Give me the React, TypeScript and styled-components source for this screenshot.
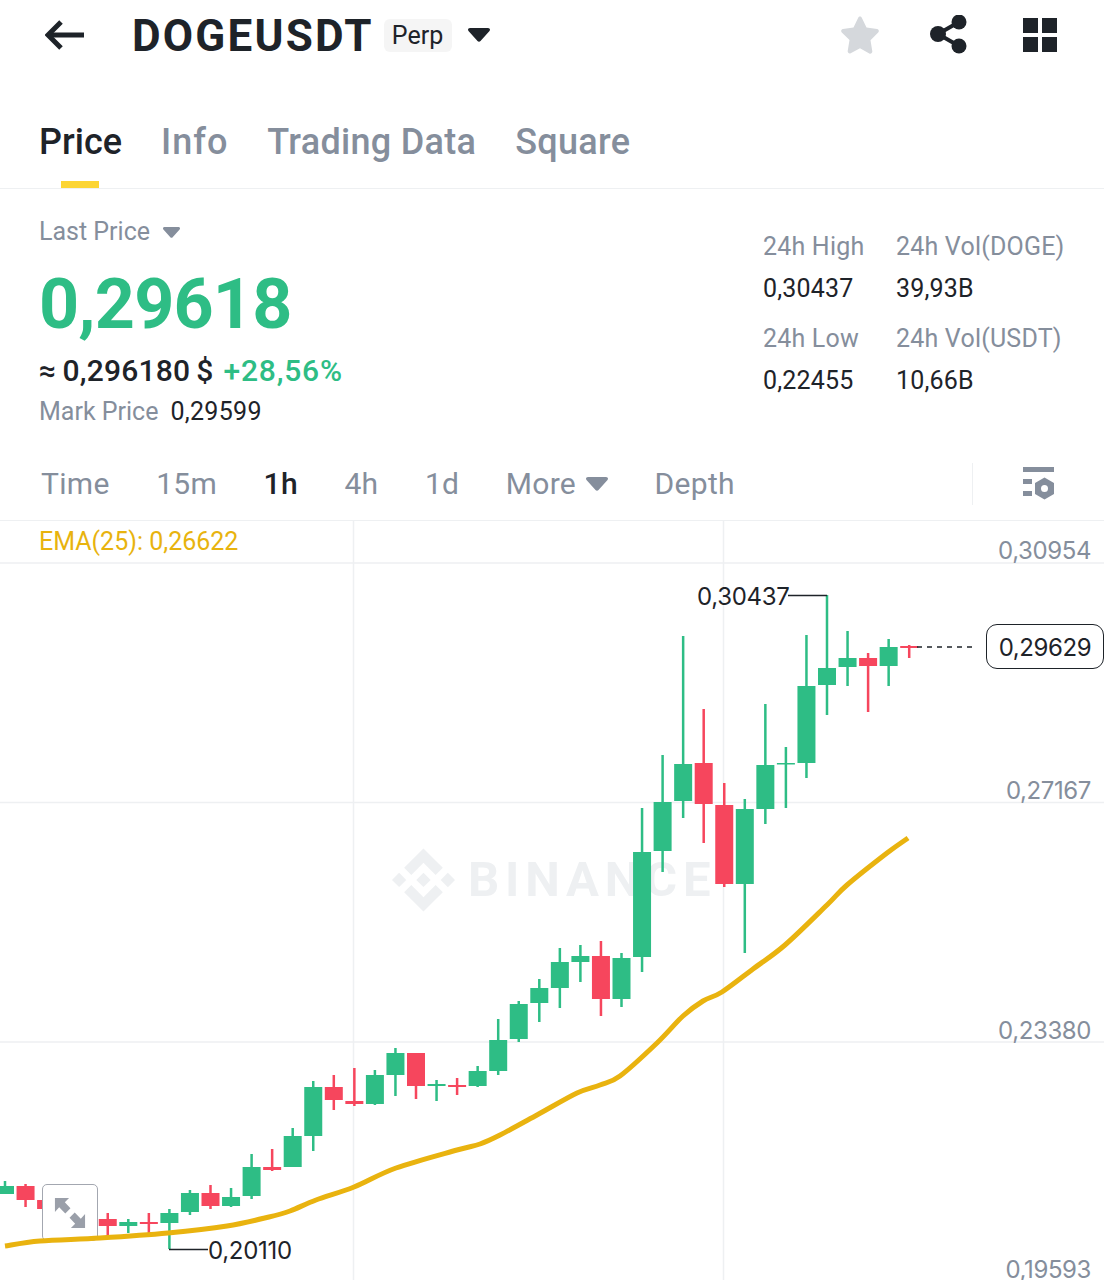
import React from 'react';
import styled, { createGlobalStyle } from 'styled-components';

const DARK = '#1e2329';
const GRAY = '#858e9c';
const GREEN = '#2ebd85';
const RED = '#f6465d';
const LINE = '#eef0f2';
const CHART_TOP = 521;

const GlobalStyle = createGlobalStyle`
  html, body {
    margin: 0;
    background: #fff;
  }
  body {
    font-family: Roboto, "Noto Sans", sans-serif;
    color: ${DARK};
  }
`;

const Page = styled.div`
  width: 1104px;
  height: 1280px;
  overflow: hidden;
  display: flex;
  flex-direction: column;
`;

const Header = styled.header`
  height: 70px;
  flex: none;
  display: flex;
  align-items: center;
  padding: 0 47px 0 45px;
  box-sizing: border-box;
`;

const Title = styled.h1`
  margin: 2px 0 0 47px;
  font-size: 44px;
  line-height: 50px;
  font-weight: 700;
  letter-spacing: 2.2px;
`;

const Badge = styled.span`
  margin-left: 10px;
  height: 33px;
  padding: 0 9px 0 8px;
  display: flex;
  align-items: center;
  font-size: 25px;
  background: #f5f5f5;
  border-radius: 6px;
`;

const HeaderCaret = styled.span`
  margin-left: 16px;
  display: flex;
  margin-top: -1px;
`;

const HeaderIcon = styled.svg<{ $gap?: number }>`
  margin-left: ${(p) => p.$gap ?? 0}px;
  flex: none;
`;

const HeaderActions = styled.div`
  margin-left: auto;
  display: flex;
  align-items: center;
`;

const TabBar = styled.nav`
  height: 119px;
  flex: none;
  box-sizing: border-box;
  padding: 50px 0 0 39px;
  display: flex;
  gap: 39px;
  border-bottom: 1px solid ${LINE};
`;

const Tab = styled.div`
  display: flex;
  flex-direction: column;
  align-items: center;
`;

const TabLabel = styled.span<{ $active?: boolean; $tracking: number }>`
  font-size: 36px;
  line-height: 44px;
  font-weight: 500;
  letter-spacing: ${(p) => p.$tracking}px;
  color: ${(p) => (p.$active ? DARK : GRAY)};
`;

const TabIndicator = styled.span<{ $active?: boolean }>`
  margin-top: 17px;
  width: 38px;
  height: 7px;
  background: ${(p) => (p.$active ? '#fcd535' : 'transparent')};
`;

const Stats = styled.section`
  height: 262px;
  flex: none;
  box-sizing: border-box;
  display: flex;
  justify-content: space-between;
  padding: 27px 40px 0 39px;
`;

const StatsMain = styled.div`
  display: flex;
  flex-direction: column;
`;

const LastPriceRow = styled.div`
  display: flex;
  align-items: center;
  gap: 13px;
  font-size: 25px;
  line-height: 32px;
  color: ${GRAY};
`;

const BigPrice = styled.div`
  margin-top: 20px;
  font-size: 70px;
  line-height: 72px;
  font-weight: 700;
  letter-spacing: -0.8px;
  color: ${GREEN};
`;

const ConvertRow = styled.div`
  margin-top: 13px;
  display: flex;
  gap: 10px;
  font-size: 30px;
  line-height: 36px;
  font-weight: 500;
  letter-spacing: 0.2px;
  word-spacing: -1.5px;
`;

const Change = styled.span`
  letter-spacing: 0.8px;
  color: ${GREEN};
`;

const MarkRow = styled.div`
  margin-top: 8px;
  display: flex;
  gap: 12px;
  font-size: 25px;
  line-height: 30px;
  color: ${GRAY};
`;

const MarkValue = styled.span`
  color: ${DARK};
  letter-spacing: 0.3px;
`;

const StatsGrid = styled.div`
  margin-top: 15px;
  display: grid;
  grid-template-columns: 133px 168px;
  row-gap: 18px;
  align-content: start;
`;

const StatCell = styled.div`
  display: flex;
  flex-direction: column;
  gap: 10px;
  font-size: 25px;
  line-height: 32px;
  white-space: nowrap;
`;

const StatLabel = styled.span`
  color: ${GRAY};
  letter-spacing: 0.2px;
`;

const StatValue = styled.span`
  letter-spacing: 0.2px;
`;

const IntervalBar = styled.div`
  height: 70px;
  flex: none;
  box-sizing: border-box;
  display: flex;
  align-items: center;
  gap: 46.5px;
  padding: 0 49px 3px 41px;
  border-bottom: 1px solid ${LINE};
`;

const Interval = styled.span<{ $active?: boolean }>`
  display: flex;
  align-items: center;
  gap: 10px;
  font-size: 30px;
  line-height: 40px;
  letter-spacing: 0.3px;
  font-weight: ${(p) => (p.$active ? 500 : 400)};
  color: ${(p) => (p.$active ? DARK : GRAY)};
`;

const IntervalDivider = styled.span`
  margin: 0 3.5px 0 auto;
  width: 1px;
  height: 42px;
  background: ${LINE};
`;

const Chart = styled.div`
  position: relative;
  flex: 1;
  overflow: hidden;
`;

const ChartLayer = styled.svg`
  position: absolute;
  inset: 0;
  width: 1104px;
  height: 759px;
`;

const Watermark = styled.div`
  position: absolute;
  left: 392px;
  top: ${848 - CHART_TOP}px;
  display: flex;
  align-items: center;
  gap: 13px;
  font-size: 49px;
  line-height: 64px;
  font-weight: 700;
  letter-spacing: 5.8px;
  color: ${LINE};
`;

const EmaLabel = styled.div`
  position: absolute;
  left: 39px;
  top: 5px;
  font-size: 25px;
  line-height: 32px;
  color: #e8b30e;
`;

const AxisLabel = styled.span<{ $y: number }>`
  position: absolute;
  right: 13px;
  top: ${(p) => p.$y - CHART_TOP - 9}px;
  font-family: Inter, sans-serif;
  font-size: 24px;
  line-height: 20px;
  letter-spacing: -0.4px;
  color: ${GRAY};
`;

const ExtremeLabel = styled.span<{ $x: number; $y: number }>`
  position: absolute;
  left: ${(p) => p.$x}px;
  top: ${(p) => p.$y - CHART_TOP - 13}px;
  font-family: Inter, sans-serif;
  font-size: 24px;
  line-height: 28px;
  letter-spacing: -0.3px;
  color: ${DARK};
`;

const LastPriceTag = styled.div`
  position: absolute;
  left: 986px;
  top: ${624 - CHART_TOP}px;
  width: 118px;
  height: 45px;
  padding-top: 1px;
  box-sizing: border-box;
  display: flex;
  align-items: center;
  justify-content: center;
  background: #fff;
  border: 1.5px solid ${DARK};
  border-radius: 11px;
  font-family: Inter, sans-serif;
  font-size: 24px;
  letter-spacing: -0.4px;
`;

const ExpandButton = styled.div`
  position: absolute;
  left: 42px;
  top: ${1184 - CHART_TOP}px;
  width: 56px;
  height: 57px;
  box-sizing: border-box;
  display: flex;
  align-items: center;
  justify-content: center;
  background: #fff;
  border: 1.5px solid #a3a7b0;
  border-radius: 5px;
`;

type Candle = [high: number, top: number, bottom: number, low: number, up: boolean];

const CANDLES: Candle[] = [
  [1181, 1186, 1194, 1194, true],
  [1184, 1186, 1200, 1207, false],
  [1200, 1200, 1209, 1209, false],
  [1205, 1208, 1214, 1216, true],
  [1206, 1210, 1216, 1220, false],
  [1213, 1219, 1226, 1236, false],
  [1219, 1222, 1226, 1233, true],
  [1213, 1222, 1224, 1233, false],
  [1209, 1213, 1223, 1249, true],
  [1190, 1193, 1212, 1215, true],
  [1185, 1193, 1206, 1209, false],
  [1188, 1197, 1206, 1207, true],
  [1154, 1167, 1196, 1199, true],
  [1149, 1167, 1170, 1171, false],
  [1128, 1136, 1167, 1167, true],
  [1081, 1087, 1136, 1151, true],
  [1075, 1087, 1100, 1110, false],
  [1068, 1101, 1104, 1106, false],
  [1070, 1075, 1104, 1105, true],
  [1048, 1053, 1075, 1096, true],
  [1053, 1053, 1086, 1099, false],
  [1080, 1084, 1086, 1101, true],
  [1078, 1085, 1087, 1095, false],
  [1066, 1071, 1086, 1087, true],
  [1019, 1040, 1071, 1075, true],
  [1001, 1004, 1039, 1042, true],
  [979, 988, 1003, 1022, true],
  [948, 962, 988, 1008, true],
  [945, 956, 962, 982, true],
  [941, 956, 999, 1016, false],
  [953, 958, 999, 1007, true],
  [808, 852, 957, 972, true],
  [755, 802, 851, 872, true],
  [636, 764, 801, 818, true],
  [709, 763, 804, 843, false],
  [783, 805, 884, 887, false],
  [799, 809, 884, 953, true],
  [704, 765, 809, 824, true],
  [747, 763, 764.5, 808, true],
  [635, 686, 763, 778, true],
  [595, 668, 685, 715, true],
  [631, 658, 667, 686, true],
  [653, 658, 666, 712, false],
  [639, 647, 666, 686, true],
  [645, 646, 648, 658, false],
];

const EMA_POINTS: [number, number][] = [
  [5, 1246], [40, 1241], [100, 1238], [168, 1233], [227, 1226], [269, 1217], [290, 1211],
  [316, 1200], [354, 1187], [396, 1168], [457, 1150], [480, 1144], [500, 1135], [537, 1115],
  [577, 1093], [600, 1085], [620, 1076], [657, 1043], [683, 1016], [703, 1001], [722, 992],
  [753, 969], [785, 945], [827, 905], [847, 885], [887, 853], [908, 838],
];

// catmull-rom through the points, the line is smooth in the app
const smoothPath = (pts: [number, number][]) => {
  let d = `M${pts[0][0]} ${pts[0][1]}`;
  for (let i = 0; i < pts.length - 1; i++) {
    const p0 = pts[Math.max(i - 1, 0)];
    const p1 = pts[i];
    const p2 = pts[i + 1];
    const p3 = pts[Math.min(i + 2, pts.length - 1)];
    const c1x = p1[0] + (p2[0] - p0[0]) / 6;
    const c1y = p1[1] + (p2[1] - p0[1]) / 6;
    const c2x = p2[0] - (p3[0] - p1[0]) / 6;
    const c2y = p2[1] - (p3[1] - p1[1]) / 6;
    d += `C${c1x} ${c1y} ${c2x} ${c2y} ${p2[0]} ${p2[1]}`;
  }
  return d;
};

const CHART_VIEW = `0 ${CHART_TOP} 1104 759`;
const candleX = (i: number) => 5 + 20.55 * i;

const Candles: React.FC = () => (
  <>
    {CANDLES.map(([high, top, bottom, low, up], i) => {
      const x = candleX(i);
      const color = up ? GREEN : RED;
      return (
        <g key={i} fill={color}>
          <rect x={x - 1.25} y={high} width={2.5} height={low - high} />
          <rect x={x - 9} y={top} width={18} height={bottom - top} />
        </g>
      );
    })}
  </>
);

const BackIcon = () => (
  <svg width="40" height="32" viewBox="0 0 40 32" fill="none" stroke={DARK} strokeWidth="5">
    <path d="M39 16H5" />
    <path d="M16 3 3 16l13 13" />
  </svg>
);

const StarIcon = () => (
  <HeaderIcon width="40" height="40" viewBox="0 0 40 40">
    <path
      d="M19 1.500c.8 0 1.400.5 1.800 1.300l4.700 9.800 10.600 1.500c1.700.3 2.300 2.300 1.100 3.500l-7.700 7.700 1.800 10.900c.3 1.700-1.500 3-3 2.200L19 33.300 9.700 38.200c-1.500.8-3.300-.5-3-2.200l1.800-10.900L.8 17.400C-.4 16.200.2 14.200 1.900 13.900l10.600-1.500 4.700-9.600c.4-.8 1-1.300 1.800-1.300z"
      fill="#d5d8dc"
    />
  </HeaderIcon>
);

const ShareIcon = () => (
  <HeaderIcon $gap={48} width="40" height="40" viewBox="0 0 40 40">
    <path d="M30 7 9 19l21 12" fill="none" stroke={DARK} strokeWidth="4" />
    <circle cx="9" cy="19" r="8" fill={DARK} />
    <circle cx="30" cy="7" r="7.500" fill={DARK} />
    <circle cx="30" cy="31" r="7.500" fill={DARK} />
  </HeaderIcon>
);

const GridIcon = () => (
  <HeaderIcon $gap={54} width="34" height="34" viewBox="0 0 34 34" fill={DARK}>
    <rect width="15" height="15" />
    <rect x="19" width="15" height="15" />
    <rect y="19" width="15" height="15" />
    <rect x="19" y="19" width="15" height="15" />
  </HeaderIcon>
);

const Caret = ({ color, width, height }: { color: string; width: number; height: number }) => (
  <svg width={width} height={height} viewBox="0 0 22 14" fill={color}>
    <path d="M2 0h18c1.800 0 2.600 1.700 1.500 3L12.500 13c-.8.9-2.200.9-3 0L.5 3C-.6 1.700.2 0 2 0z" />
  </svg>
);

const ChartSettingsIcon = () => (
  <svg width="32" height="34" viewBox="0 0 32 34" fill={GRAY}>
    <rect x="0" y="0" width="31" height="5" />
    <rect x="0" y="12" width="9" height="5" />
    <rect x="0" y="24" width="9" height="5" />
    <path
      fillRule="evenodd"
      d="M21.500 10.500 31 16v11l-9.500 5.500L12 27V16l9.500-5.500zm0 7.500a3.500 3.500 0 1 0 0 7 3.500 3.500 0 0 0 0-7z"
    />
  </svg>
);

const BinanceLogo = () => (
  <svg width="63" height="64" viewBox="0 0 24 24" fill={LINE}>
    <path d="M16.624 13.9202l2.7175 2.7154-7.353 7.353-7.353-7.352 2.7175-2.7164 4.6355 4.6595 4.6356-4.6595zm4.6366-4.6366L24 12l-2.7154 2.7164L18.5682 12l2.6924-2.7164zm-9.272.001l2.7163 2.6914-2.7164 2.7174v-.001L9.2721 12l2.7164-2.7154zm-9.2722-.001L5.4088 12l-2.6914 2.6924L0 12l2.7164-2.7164zM11.9885.0115l7.353 7.329-2.7174 2.7154-4.6356-4.6356-4.6355 4.6595-2.7174-2.7154 7.353-7.353z" />
  </svg>
);

const ExpandIcon = () => (
  <svg width="32" height="32" viewBox="0 0 34 34" fill="#9a9fa9">
    <path d="M1 1h15l-4.500 4.500L17.500 12l-5.500 5.500-6.500-6.500L1 16z" />
    <path d="M33 33H18l4.500-4.500L16.500 22l5.500-5.500 6.500 6.500L33 18z" />
  </svg>
);

const App: React.FC = () => {
  return (
    <Page>
      <GlobalStyle />
      <Header>
        <BackIcon />
        <Title>DOGEUSDT</Title>
        <Badge>Perp</Badge>
        <HeaderCaret>
          <Caret color={DARK} width={22} height={14} />
        </HeaderCaret>
        <HeaderActions>
          <StarIcon />
          <ShareIcon />
          <GridIcon />
        </HeaderActions>
      </Header>

      <TabBar>
        <Tab>
          <TabLabel $active $tracking={0}>Price</TabLabel>
          <TabIndicator $active />
        </Tab>
        <Tab>
          <TabLabel $tracking={1}>Info</TabLabel>
          <TabIndicator />
        </Tab>
        <Tab>
          <TabLabel $tracking={0.3}>Trading Data</TabLabel>
          <TabIndicator />
        </Tab>
        <Tab>
          <TabLabel $tracking={0.3}>Square</TabLabel>
          <TabIndicator />
        </Tab>
      </TabBar>

      <Stats>
        <StatsMain>
          <LastPriceRow>
            Last Price
            <Caret color={GRAY} width={17} height={11} />
          </LastPriceRow>
          <BigPrice>0,29618</BigPrice>
          <ConvertRow>
            ≈ 0,296180 $<Change>+28,56%</Change>
          </ConvertRow>
          <MarkRow>
            Mark Price<MarkValue>0,29599</MarkValue>
          </MarkRow>
        </StatsMain>
        <StatsGrid>
          <StatCell>
            <StatLabel>24h High</StatLabel>
            <StatValue>0,30437</StatValue>
          </StatCell>
          <StatCell>
            <StatLabel>24h Vol(DOGE)</StatLabel>
            <StatValue>39,93B</StatValue>
          </StatCell>
          <StatCell>
            <StatLabel>24h Low</StatLabel>
            <StatValue>0,22455</StatValue>
          </StatCell>
          <StatCell>
            <StatLabel>24h Vol(USDT)</StatLabel>
            <StatValue>10,66B</StatValue>
          </StatCell>
        </StatsGrid>
      </Stats>

      <IntervalBar>
        <Interval>Time</Interval>
        <Interval>15m</Interval>
        <Interval $active>1h</Interval>
        <Interval>4h</Interval>
        <Interval>1d</Interval>
        <Interval>
          More
          <Caret color={GRAY} width={22} height={14} />
        </Interval>
        <Interval>Depth</Interval>
        <IntervalDivider />
        <ChartSettingsIcon />
      </IntervalBar>

      <Chart>
        <ChartLayer viewBox={CHART_VIEW}>
          <g stroke={LINE} strokeWidth="1.500">
            <path d="M0 563H1104M0 802.500H1104M0 1042H1104" />
            <path d="M353.500 521V1280M723.500 521V1280" />
          </g>
        </ChartLayer>
        <Watermark>
          <BinanceLogo />
          BINANCE
        </Watermark>
        <ChartLayer viewBox={CHART_VIEW}>
          <Candles />
          <path d="M788 595.500H827M169 1249.500H208" stroke={DARK} strokeWidth="1.500" fill="none" />
          <path d="M917 647H975" stroke={DARK} strokeWidth="1.500" strokeDasharray="5 5" fill="none" />
        </ChartLayer>
        <ExpandButton>
          <ExpandIcon />
        </ExpandButton>
        <ChartLayer viewBox={CHART_VIEW}>
          <path d={smoothPath(EMA_POINTS)} fill="none" stroke="#e9b30f" strokeWidth="5" />
        </ChartLayer>
        <EmaLabel>EMA(25): 0,26622</EmaLabel>
        <AxisLabel $y={550}>0,30954</AxisLabel>
        <AxisLabel $y={790}>0,27167</AxisLabel>
        <AxisLabel $y={1030}>0,23380</AxisLabel>
        <AxisLabel $y={1269}>0,19593</AxisLabel>
        <ExtremeLabel $x={697} $y={596}>0,30437</ExtremeLabel>
        <ExtremeLabel $x={208} $y={1250}>0,20110</ExtremeLabel>
        <LastPriceTag>0,29629</LastPriceTag>
      </Chart>
    </Page>
  );
};

export default App;
